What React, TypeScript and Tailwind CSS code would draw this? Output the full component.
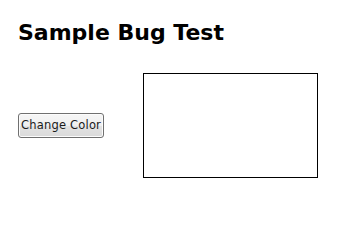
export default function App() {
  return (
    <div className="min-h-screen bg-white px-[18px] pt-[20px] font-['DejaVu_Sans',Verdana,sans-serif] text-black">
      <h1 className="text-[22px] leading-[26px] font-bold">Sample Bug Test</h1>
      <div className="mt-[27px] flex items-center">
        <button className="h-[25px] w-[86px] rounded-[3px] border border-[#707070] bg-[linear-gradient(#f6f6f6_0%,#efefef_50%,#e3e3e3_50%,#dadada_100%)] text-[11.5px] tracking-[0.2px] text-[#1a1a1a] shadow-[inset_0_0_0_1px_#fcfcfc]">
          Change Color
        </button>
        <div className="ml-[39px] h-[105px] w-[175px] border border-black"></div>
      </div>
    </div>
  );
}
